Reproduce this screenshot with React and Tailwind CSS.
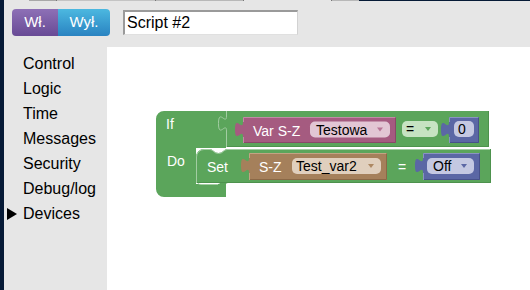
import React from 'react';

const GREEN = '#5ba55b';
const LIGHT = '#a2cda2';

// output block with a left puzzle tab (Blockly geras-style)
const outPath = (x, y, w, h) =>
  `M${x},${y} V${y + 5} c0,10 -8,-8 -8,7.5 s8,-2.5 8,7.5 V${y + h} H${x + w} V${y} Z`;

function OutBlock({ x, y, w, h, fill, light, dark }) {
  return (
    <g>
      <path d={outPath(x, y, w, h)} fill={fill} />
      <path d={`M${x + 0.5},${y + h} V${y + 20}`} stroke={light} />
      <path d={`M${x + 0.5},${y + 5} V${y + 0.5} H${x + w - 1}`} stroke={light} fill="none" />
      <path d={`M${x + 1},${y + h - 0.5} H${x + w - 0.5} V${y + 1}`} stroke={dark} fill="none" />
    </g>
  );
}

function Field({ x, y, w, label, bg, arrow, tx }) {
  return (
    <g>
      <rect x={x} y={y} width={w} height={16} rx={5} fill={bg} />
      <text x={tx ?? x + 5} y={y + 13} fontSize="14" fill="#000">{label}</text>
      {arrow && (
        <polygon
          points={`${x + w - 13},${y + 6} ${x + w - 7},${y + 6} ${x + w - 10},${y + 10}`}
          fill={arrow}
        />
      )}
    </g>
  );
}

function Blocks() {
  return (
    <svg
      width="423"
      height="243"
      viewBox="107 47 423 243"
      className="block font-['Liberation_Sans',Arial,sans-serif]"
    >
      {/* if / do block */}
      <path
        d="M156,119 A8,8 0 0 1 164,111 H226 V148 H196 V184 H226 V197 H164 A8,8 0 0 1 156,189 Z"
        fill={GREEN}
      />
      <path d="M197,174 V180 Q197,184.5 201,184.5 H218" stroke={LIGHT} fill="none" />
      <text x="166" y="129" fontSize="14" fill="#fff">If</text>
      <text x="167" y="166" fontSize="14" fill="#fff">Do</text>

      {/* compare block */}
      <path d={outPath(226, 111, 263, 36)} fill={GREEN} />
      <path
        d="M226.5,147 V131 M226.5,111 V116 c0,10 -8,-8 -8,7.5 s8,-2.5 8,7.5"
        stroke={LIGHT}
        fill="none"
      />
      <path d="M227,146.5 H488.5 V111" stroke="#4d924d" fill="none" />

      {/* variable S-Z */}
      <OutBlock x={243} y={117} w={153} h={26} fill="#a55b80" light="#c28aa6" dark="#8a4868" />
      <text x="253" y="136" fontSize="14" fill="#fff">Var S-Z</text>
      <Field x={310} y={121.5} w={80} label="Testowa" bg="#e2c6d4" arrow="#b77596" tx={316} />

      <Field x={402} y={121} w={36} label="=" bg="#c6e3c2" arrow={GREEN} tx={406} />

      <OutBlock x={449} y={117} w={30} h={26} fill="#5b67a5" light="#8a93c2" dark="#47518a" />
      <Field x={454} y={121} w={20} label="0" bg="#c4c8e2" tx={458} />

      {/* set block */}
      <path
        d="M196,157 A8,8 0 0 1 204,149 H210 c3,0 4,4 8.5,4 s5.5,-4 8.5,-4 H491 V183 H228 c-3,0 -4,4 -5,4 s-2,-4 -5,-4 H196 Z"
        fill={GREEN}
      />
      <path
        d="M196.5,183 V157 A7.5,7.5 0 0 1 204,149.5 H210 c3,0 4,4 8.5,4 s5.5,-4 8.5,-4 H490"
        stroke={LIGHT}
        fill="none"
      />
      <path d="M197,182.5 H490.5 V149" stroke="#4d924d" fill="none" />
      <text x="207" y="172" fontSize="14" fill="#fff">Set</text>

      <OutBlock x={249} y={153} w={138} h={27} fill="#a5805b" light="#c2a383" dark="#8a6846" />
      <text x="259" y="172" fontSize="14" fill="#fff">S-Z</text>
      <Field x={292} y={158} w={89} label="Test_var2" bg="#e0cfbd" arrow="#ad8862" tx={296} />

      <text x="398" y="172" fontSize="14" fill="#fff">=</text>

      <OutBlock x={423} y={153} w={57} h={27} fill="#5b67a5" light="#8a93c2" dark="#47518a" />
      <Field x={427} y={158} w={47} label="Off" bg="#c4c8e2" arrow="#5b67a5" tx={433} />
    </svg>
  );
}

const categories = ['Control', 'Logic', 'Time', 'Messages', 'Security', 'Debug/log', 'Devices'];

export default function App() {
  return (
    <div className="w-[530px] h-[290px] flex bg-[#e6e6e6] overflow-hidden font-['Liberation_Sans',Arial,sans-serif]">
      <div className="w-[4px] bg-[#061a36]" />

      <div className="flex-1 flex flex-col">
        {/* tab remnants on the very top row */}
        <div className="h-px flex">
          <div className="w-[25px]" />
          <div className="w-[27px] bg-[#a8a8a8]" />
          <div className="w-px bg-[#777]" />
          <div className="w-[98px] bg-[#c4c4c4]" />
          <div className="w-px bg-[#777]" />
          <div className="w-[87px] bg-[#b8b8b8]" />
          <div className="w-px bg-[#777]" />
          <div className="w-[87px]" />
          <div className="w-px bg-[#777]" />
          <div className="w-[27px] bg-[#b8b8b8]" />
          <div className="flex-1 bg-[#061a36]" />
        </div>

        {/* header */}
        <div className="h-[46px] flex items-start pt-[8px] pl-[8px]">
          <div className="flex h-[27px] text-white text-[15px] rounded-[4px] overflow-hidden">
            <button className="w-[46px] flex items-center justify-center bg-gradient-to-b from-[#8e70b6] to-[#684a95]">
              Wł.
            </button>
            <button className="w-[52px] flex items-center justify-center bg-gradient-to-b from-[#4cb8e0] to-[#2a83c1]">
              Wył.
            </button>
          </div>
          <input
            readOnly
            value="Script #2"
            className="ml-[13px] mt-[1px] w-[175px] h-[25px] bg-white border-t-2 border-l-2 border-r border-b border-t-[#9a9a9a] border-l-[#9a9a9a] border-r-[#d2d2d2] border-b-[#e0e0e0] px-[2px] text-[16px] text-black outline-none"
          />
        </div>

        <div className="flex-1 flex min-h-0">
          {/* toolbox */}
          <div className="w-[103px] pt-[4px]">
            {categories.map((c) => (
              <div key={c} className="h-[25px] flex items-center text-[16px] text-black">
                <div className="w-[19px] pl-[3px] flex items-center">
                  {c === 'Devices' && (
                    <svg width="10" height="12" viewBox="0 0 10 12">
                      <polygon points="0,0 10,6 0,12" fill="#000" />
                    </svg>
                  )}
                </div>
                <span>{c}</span>
              </div>
            ))}
          </div>

          {/* workspace */}
          <div className="flex-1 bg-white overflow-hidden">
            <Blocks />
          </div>
        </div>
      </div>
    </div>
  );
}
